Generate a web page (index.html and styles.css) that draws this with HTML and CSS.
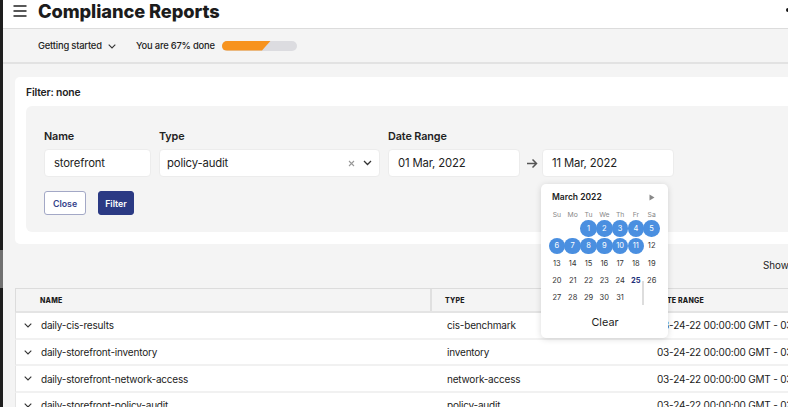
FILE: index.html
```html
<!DOCTYPE html>
<html>
<head>
<meta charset="utf-8">
<link rel="stylesheet" href="styles.css">
</head>
<body>
<div class="strip"></div>
<div class="app">
  <header class="topbar">
    <svg class="burger" width="14" height="12" viewBox="0 0 14 12"><path d="M0.5 1h13M0.5 6h13M0.5 11h13" stroke="#222" stroke-width="1.6" fill="none"/></svg>
    <h1 class="title">Compliance Reports</h1>
    <span class="dot"></span>
  </header>
  <div class="subbar">
    <span class="started">Getting started <svg width="8" height="5" viewBox="0 0 8 5"><path d="M0.7 0.7L4 4l3.3-3.3" stroke="#333" stroke-width="1.1" fill="none"/></svg></span>
    <span class="done">You are 67% done</span>
    <span class="progress"><span class="fill"></span></span>
  </div>
  <main class="main">
    <section class="card">
      <div class="card-title">Filter: none</div>
      <div class="panel">
        <div class="fields">
          <div class="field">
            <label class="label">Name</label>
            <div class="input w-name">storefront</div>
          </div>
          <div class="field">
            <label class="label">Type</label>
            <div class="input w-type">
              <span>policy-audit</span>
              <span class="icons">
                <svg width="7" height="7" viewBox="0 0 7 7"><path d="M1 1l5 5M6 1l-5 5" stroke="#999" stroke-width="1.1"/></svg>
                <svg width="9" height="6" viewBox="0 0 9 6"><path d="M1 1l3.5 3.5L8 1" stroke="#333" stroke-width="1.3" fill="none"/></svg>
              </span>
            </div>
          </div>
          <div class="field">
            <label class="label">Date Range</label>
            <div class="range">
              <div class="input w-date">01 Mar, 2022</div>
              <svg class="arrow" width="12" height="11" viewBox="0 0 12 11"><path d="M1 5.5h9.5M6.5 1.5l4 4-4 4" stroke="#555" stroke-width="1.5" fill="none"/></svg>
              <div class="date2">
                <div class="input w-date">11 Mar, 2022</div>
                <div class="calendar">
                  <div class="cal-head"><span>March 2022</span><svg width="6" height="7" viewBox="0 0 6 7"><path d="M0.5 0.5l5 3-5 3z" fill="#888"/></svg></div>
                  <div class="cal-grid">
                    <span class="wd">Su</span><span class="wd">Mo</span><span class="wd">Tu</span><span class="wd">We</span><span class="wd">Th</span><span class="wd">Fr</span><span class="wd">Sa</span>
                    <span></span><span></span><span class="sel">1</span><span class="sel">2</span><span class="sel">3</span><span class="sel">4</span><span class="sel">5</span>
                    <span class="sel">6</span><span class="sel">7</span><span class="sel">8</span><span class="sel">9</span><span class="sel">10</span><span class="sel">11</span><span>12</span>
                    <span>13</span><span>14</span><span>15</span><span>16</span><span>17</span><span>18</span><span>19</span>
                    <span>20</span><span>21</span><span>22</span><span>23</span><span>24</span><span class="today">25</span><span>26</span>
                    <span>27</span><span>28</span><span>29</span><span>30</span><span>31</span><span class="bar"></span><span></span>
                  </div>
                  <div class="clear">Clear</div>
                </div>
              </div>
            </div>
          </div>
        </div>
        <div class="buttons">
          <button class="btn btn-close">Close</button>
          <button class="btn btn-filter">Filter</button>
        </div>
      </div>
    </section>
    <div class="showing">Showing</div>
    <div class="table">
      <div class="thead">
        <div class="th c-name">NAME</div><div class="th c-type">TYPE</div><div class="th c-date">DATE RANGE</div>
      </div>
      <div class="row"><div class="td c-name"><svg class="chev" width="8" height="5" viewBox="0 0 8 5"><path d="M0.7 0.7L4 4l3.3-3.3" stroke="#333" stroke-width="1.1" fill="none"/></svg>daily-cis-results</div><div class="td c-type">cis-benchmark</div><div class="td c-date">03-24-22 00:00:00 GMT - 03-24-22</div></div>
      <div class="row"><div class="td c-name"><svg class="chev" width="8" height="5" viewBox="0 0 8 5"><path d="M0.7 0.7L4 4l3.3-3.3" stroke="#333" stroke-width="1.1" fill="none"/></svg>daily-storefront-inventory</div><div class="td c-type">inventory</div><div class="td c-date">03-24-22 00:00:00 GMT - 03-24-22</div></div>
      <div class="row"><div class="td c-name"><svg class="chev" width="8" height="5" viewBox="0 0 8 5"><path d="M0.7 0.7L4 4l3.3-3.3" stroke="#333" stroke-width="1.1" fill="none"/></svg>daily-storefront-network-access</div><div class="td c-type">network-access</div><div class="td c-date">03-24-22 00:00:00 GMT - 03-24-22</div></div>
      <div class="row"><div class="td c-name"><svg class="chev" width="8" height="5" viewBox="0 0 8 5"><path d="M0.7 0.7L4 4l3.3-3.3" stroke="#333" stroke-width="1.1" fill="none"/></svg>daily-storefront-policy-audit</div><div class="td c-type">policy-audit</div><div class="td c-date">03-24-22 00:00:00 GMT - 03-24-22</div></div>
    </div>
  </main>
</div>
</body>
</html>
```
FILE: styles.css
```css
* { box-sizing: border-box; }
html, body { margin: 0; height: 100%; overflow: hidden; }
body {
  display: flex;
  font-family: "Inter", "Noto Sans", sans-serif;
  color: #1c1c1c;
  background: #f4f4f4;
}
.strip {
  width: 3px;
  flex: none;
  background: linear-gradient(#1e1e1e 0, #1e1e1e 250px, #707070 250px, #707070 288px, #1e1e1e 288px);
}
.app { flex: none; width: 1000px; display: flex; flex-direction: column; }
.app > * { flex: none; }
.topbar {
  height: 29px;
  background: #fff;
  border-bottom: 1px solid #dcdcdc;
  display: flex;
  align-items: flex-start;
  padding-left: 10px;
  position: relative;
}
.burger { margin-top: 5px; margin-right: 11px; }
.title { margin: 0; font-size: 18.3px; line-height: 22px; font-weight: 800; letter-spacing: -0.1px; }
.dot { position: absolute; left: 783px; top: 8px; width: 4px; height: 4px; border-radius: 50%; background: #111; }
.subbar {
  height: 35px;
  border-bottom: 2px solid #e2e2e2;
  display: flex;
  align-items: center;
  padding-left: 35px;
  font-size: 9.4px;
  letter-spacing: -0.2px;
  color: #222;
  font-weight: 500;
}
.started svg { margin-left: 4px; vertical-align: middle; }
.done { margin-left: 20px; }
.progress {
  margin-left: 7px;
  width: 75px;
  height: 10px;
  border-radius: 5px;
  background: #dcdce0;
  overflow: hidden;
  position: relative;
}
.fill {
  position: absolute; left: 0; top: 0; bottom: 0; width: 49px;
  background: #f7931e;
  clip-path: polygon(0 0, 100% 0, 82% 100%, 0 100%);
}
.main { padding: 13px 0 0 12px; }
.card {
  background: #fff;
  border-radius: 5px;
  padding: 8px 0 12px 11px;
}
.card-title { font-size: 10.3px; letter-spacing: -0.15px; font-weight: 600; color: #222; line-height: 14px; margin-bottom: 7px; }
.panel {
  background: #f4f4f4;
  border-radius: 6px;
  padding: 24px 18px 17px;
}
.fields { display: flex; gap: 8px; }
.field { display: flex; flex-direction: column; }
.label { font-size: 10.8px; letter-spacing: -0.1px; font-weight: 600; color: #222; margin-bottom: 5px; line-height: 14px; }
.input {
  height: 28px;
  background: #fff;
  border-radius: 4px;
  font-size: 11.3px;
  letter-spacing: -0.15px;
  color: #222;
  display: flex;
  align-items: center;
  padding-left: 9px;
  border: 1px solid #ececec;
}
.w-name { width: 107px; }
.w-type { width: 221px; padding-left: 7px; justify-content: space-between; padding-right: 7px; }
.icons { display: flex; gap: 8px; align-items: center; }
.w-date { width: 132px; padding-left: 9px; }
.range { display: flex; align-items: center; }
.arrow { margin: 0 4px 0 6px; }
.date2 { position: relative; }
.calendar {
  position: absolute;
  left: -1px;
  top: 35px;
  width: 127px;
  height: 154px;
  background: #fff;
  border-radius: 5px;
  box-shadow: 0 1px 6px rgba(0,0,0,0.15);
  z-index: 5;
  padding: 7px 7px 0 8px;
}
.cal-head { display: flex; justify-content: space-between; align-items: center; font-size: 8.5px; font-weight: 600; color: #222; padding: 0 6px 0 3px; height: 12px; }
.cal-grid {
  margin-top: 5px;
  display: grid;
  grid-template-columns: repeat(7, 15.8px);
  grid-template-rows: 12px repeat(5, 17.3px);
  font-size: 7.5px;
  color: #333;
}
.cal-grid span { display: flex; align-items: center; justify-content: center; }
.cal-grid .wd { color: #888; font-size: 6.8px; }
.cal-grid span.sel {
  background: #4a8fe0;
  color: #fff;
  border-radius: 50%;
  width: 16.5px; height: 16.5px;
  margin-left: -0.4px;
  align-self: center;
}
.cal-grid .today { color: #1e2f7a; font-weight: 700; }
.cal-grid .bar { justify-self: end; width: 2px; background: #ddd; margin-top: -8px; height: 24px; }
.clear { text-align: center; font-size: 10.8px; color: #222; margin-top: 10px; }
.buttons { display: flex; gap: 12px; margin-top: 14px; }
.btn {
  height: 24px;
  border-radius: 3px;
  font-family: inherit;
  font-size: 8.8px;
  font-weight: 600;
  padding: 0;
}
.btn-close { background: #fff; border: 1px solid #a3a8c6; color: #34428a; width: 42px; }
.btn-filter { background: #2b3a84; border: 1px solid #2b3a84; color: #fff; width: 36px; }
.showing { padding-left: 748px; padding-top: 15px; line-height: 14px; height: 44px; font-size: 9.8px; color: #222; }
.table { width: 900px; font-size: 10px; letter-spacing: -0.2px; color: #1c1c1c; }
.thead {
  display: grid;
  grid-template-columns: 416px 212px 1fr;
  height: 25px;
  background: #f4f4f4;
  border-top: 1px solid #dcdcdc;
  border-bottom: 2px solid #e4e4e4;
  border-left: 1px solid #dcdcdc;
}
.th { display: flex; align-items: center; font-size: 7px; font-weight: 800; letter-spacing: 0.2px; }
.th.c-name { padding-left: 24px; border-right: 2px solid #e0e0e0; }
.th.c-type { padding-left: 13px; }
.th.c-date { padding-left: 13px; }
.row {
  display: grid;
  grid-template-columns: 416px 212px 1fr;
  height: 26.7px;
  background: #fff;
  border-bottom: 2px solid #f1f1f1;
  border-left: 1px solid #e4e4e4;
}
.td { display: flex; align-items: center; white-space: nowrap; }
.td.c-name { padding-left: 8px; }
.td.c-type { padding-left: 15px; }
.td.c-date { padding-left: 13px; }
.chev { margin-right: 9px; }
```
